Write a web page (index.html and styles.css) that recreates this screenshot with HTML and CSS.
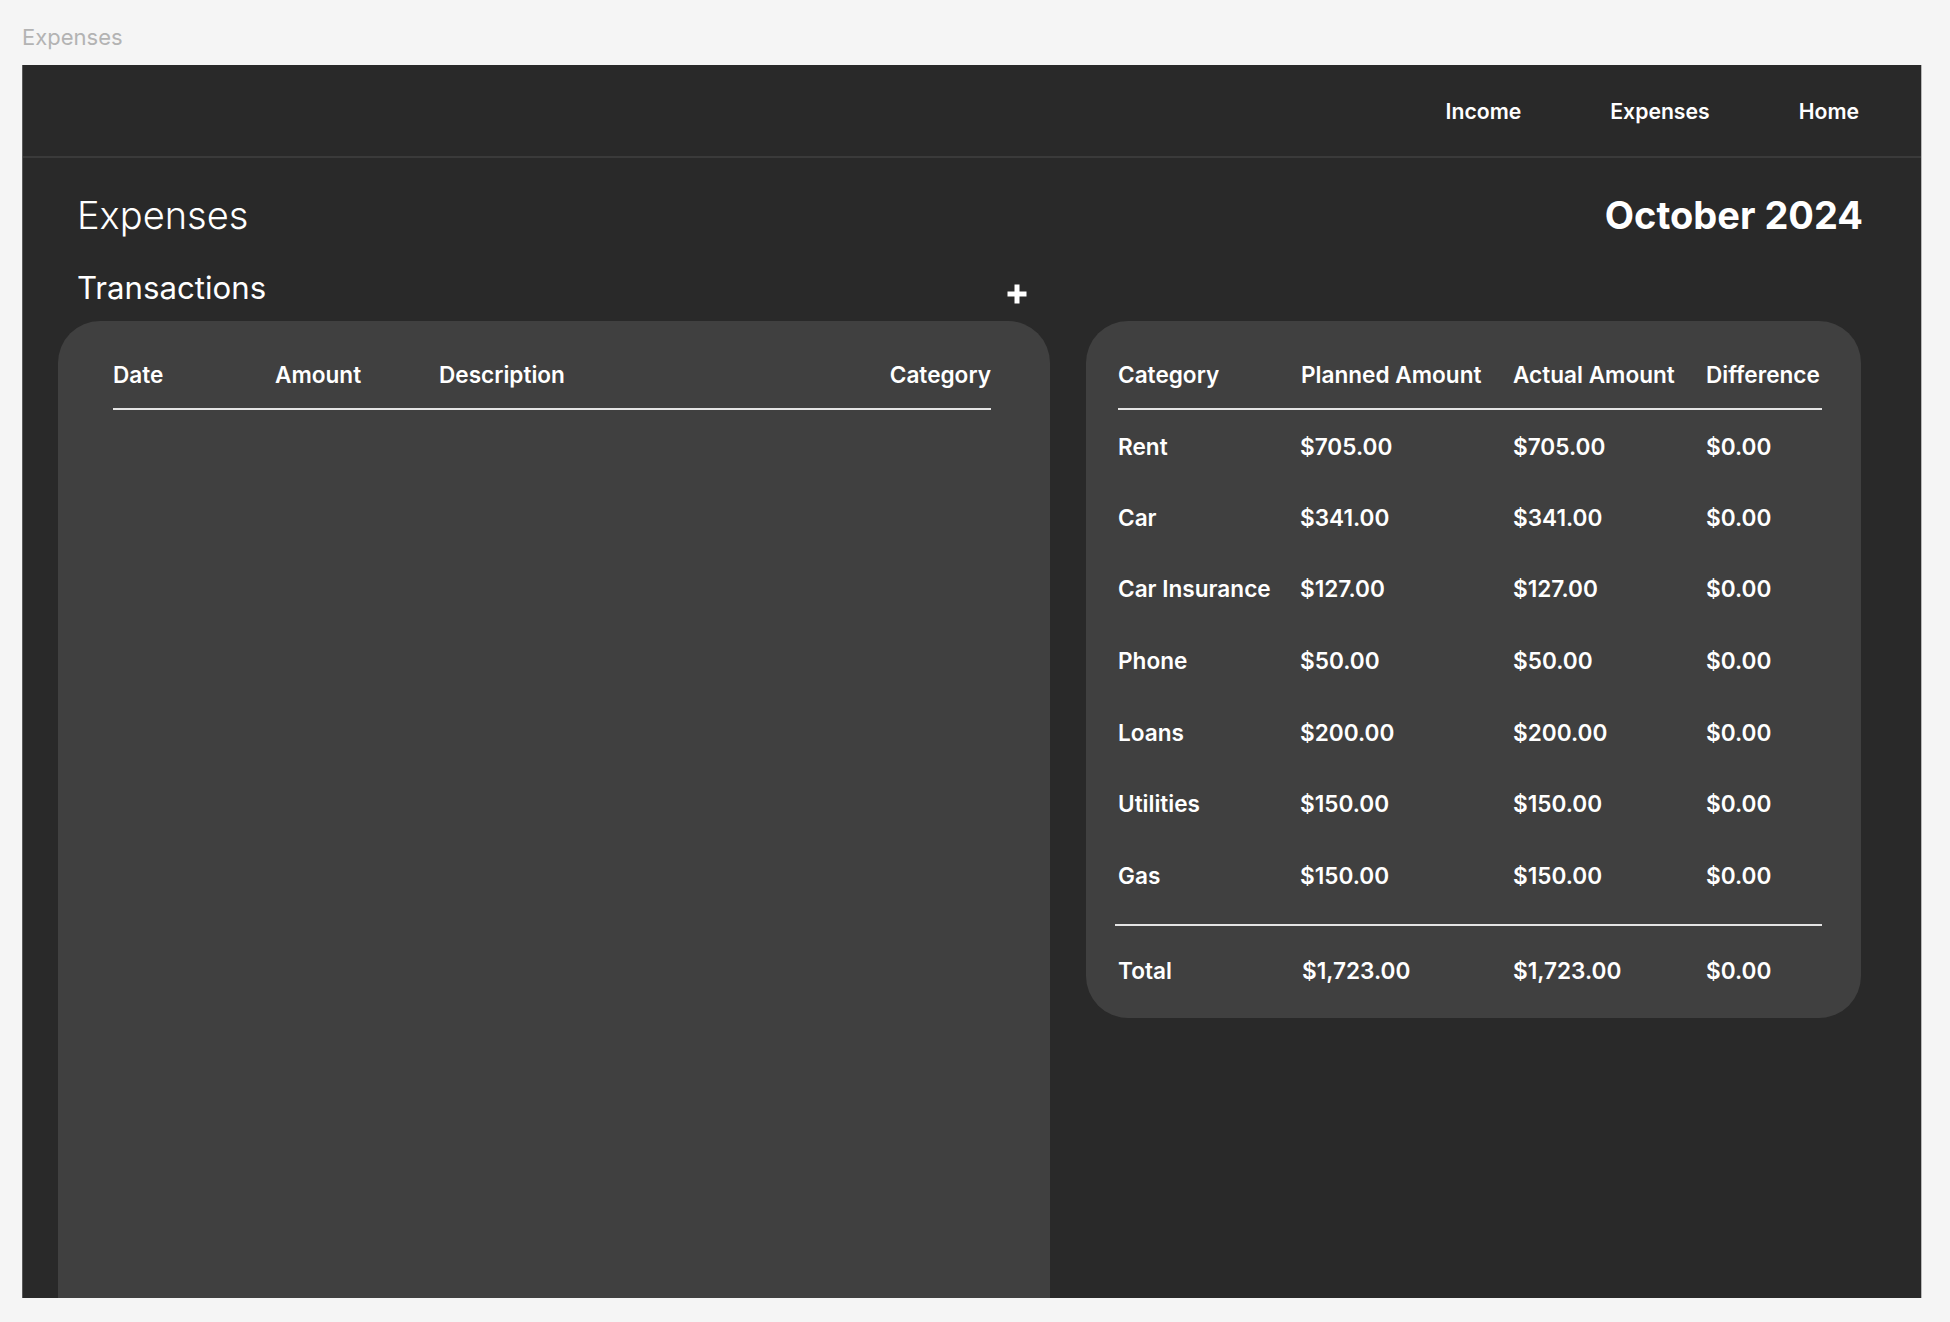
FILE: index.html
```html
<!DOCTYPE html>
<html lang="en">
<head>
<meta charset="utf-8">
<title>Expenses</title>
<link rel="stylesheet" href="styles.css">
</head>
<body>
<div class="page-label">Expenses</div>
<div class="frame">
  <nav class="nav">
    <a class="nav-link" href="#">Income</a>
    <a class="nav-link" href="#">Expenses</a>
    <a class="nav-link" href="#">Home</a>
  </nav>
  <main class="content">
    <div class="title-row">
      <h1 class="page-title">Expenses</h1>
      <div class="month">October 2024</div>
    </div>
    <div class="columns">
      <div class="tx-head">
        <h2 class="section-title">Transactions</h2>
        <button class="add-btn" type="button" aria-label="Add transaction">
          <svg width="20" height="20" viewBox="0 0 20 20"><path d="M10 0.5v19M0.5 10h19" stroke="#fff" stroke-width="5" fill="none"/></svg>
        </button>
      </div>
      <section class="card tx-card">
        <div class="tx-header">
          <span>Date</span>
          <span>Amount</span>
          <span>Description</span>
          <span class="right">Category</span>
        </div>
      </section>
      <section class="card summary-card">
        <div class="sum-row sum-header">
          <span>Category</span><span>Planned Amount</span><span>Actual Amount</span><span>Difference</span>
        </div>
        <div class="sum-row"><span>Rent</span><span class="v">$705.00</span><span>$705.00</span><span>$0.00</span></div>
        <div class="sum-row"><span>Car</span><span class="v">$341.00</span><span>$341.00</span><span>$0.00</span></div>
        <div class="sum-row"><span>Car Insurance</span><span class="v">$127.00</span><span>$127.00</span><span>$0.00</span></div>
        <div class="sum-row"><span>Phone</span><span class="v">$50.00</span><span>$50.00</span><span>$0.00</span></div>
        <div class="sum-row"><span>Loans</span><span class="v">$200.00</span><span>$200.00</span><span>$0.00</span></div>
        <div class="sum-row"><span>Utilities</span><span class="v">$150.00</span><span>$150.00</span><span>$0.00</span></div>
        <div class="sum-row"><span>Gas</span><span class="v">$150.00</span><span>$150.00</span><span>$0.00</span></div>
        <div class="sum-divider"></div>
        <div class="sum-row sum-total"><span>Total</span><span class="t-planned">$1,723.00</span><span>$1,723.00</span><span>$0.00</span></div>
      </section>
    </div>
  </main>
</div>
</body>
</html>
```

FILE: styles.css
```css
* { box-sizing: border-box; }
html, body { margin: 0; padding: 0; }
body {
  background: #f5f5f5;
  font-family: Inter, "Noto Sans", "Liberation Sans", sans-serif;
  color: #fff;
  height: 1322px;
  overflow: hidden;
}
.page-label {
  padding: 24px 0 0 22px;
  height: 65px;
  font-size: 22px;
  line-height: 26px;
  color: #b3b3b3;
}
.frame {
  margin-left: 22px;
  width: 1900px;
  height: 1233px;
  background: #292929;
  border-left: 1px solid #5a5a5a;
  border-right: 1px solid #b8b8b8;
  overflow: hidden;
}
.nav {
  height: 93px;
  border-bottom: 2px solid #3a3a3a;
  display: flex;
  justify-content: flex-end;
  align-items: center;
  gap: 89px;
  padding: 0 62px 0 0;
}
.nav-link {
  color: #fff;
  text-decoration: none;
  font-size: 21.2px;
  font-weight: 600;
  line-height: 26px;
  margin-top: 1px;
}
.content {
  padding: 34px 58px 0 35px;
}
.title-row {
  display: flex;
  justify-content: space-between;
  align-items: center;
  padding-left: 19px;
}
.page-title {
  margin: 0;
  font-size: 38px;
  line-height: 46px;
  font-weight: 300;
}
.month {
  font-size: 38px;
  line-height: 46px;
  font-weight: 700;
}
.columns {
  margin-top: 31px;
  margin-right: 2px;
  display: grid;
  grid-template-columns: minmax(0, 992fr) minmax(0, 775fr);
  grid-template-rows: auto 1fr;
  column-gap: 36px;
  row-gap: 14px;
}
.tx-head {
  grid-column: 1;
  grid-row: 1;
  display: flex;
  justify-content: space-between;
  align-items: flex-end;
  padding: 0 23px 0 19px;
}
.section-title {
  margin: 0;
  font-size: 31.2px;
  line-height: 38px;
  font-weight: 400;
}
.add-btn {
  background: none;
  border: 0;
  padding: 0;
  margin-bottom: 3px;
  width: 20px;
  height: 20px;
  display: block;
  cursor: pointer;
}
.add-btn svg { display: block; }
.card {
  background: #404040;
  border-radius: 42px;
}
.tx-card {
  grid-column: 1;
  grid-row: 2;
  height: 1100px;
  padding: 41px 59px 0 55px;
}
.tx-header {
  display: grid;
  grid-template-columns: 162px 164px 1fr auto;
  font-size: 22.6px;
  line-height: 26px;
  font-weight: 600;
  padding-bottom: 20px;
  border-bottom: 2px solid #e4e4e4;
}
.right { text-align: right; }
.summary-card {
  grid-column: 2;
  grid-row: 2;
  align-self: start;
  padding: 41px 39px 34px 32px;
}
.sum-row {
  display: grid;
  grid-template-columns: 183px 212px 193px 1fr;
  font-size: 22.6px;
  line-height: 26px;
  font-weight: 600;
  height: 71.7px;
  align-items: center;
}
.sum-row .v { margin-left: -1px; }
.sum-header {
  height: auto;
  padding-bottom: 20px;
  border-bottom: 2px solid #e4e4e4;
}
.sum-row:nth-child(2) { padding-top: 2px; }
.sum-divider {
  margin: 12px 0 0 -3px;
  border-top: 2px solid #e4e4e4;
}
.sum-total {
  height: auto;
  padding-top: 32px;
}
.t-planned { padding-left: 1px; }
```
